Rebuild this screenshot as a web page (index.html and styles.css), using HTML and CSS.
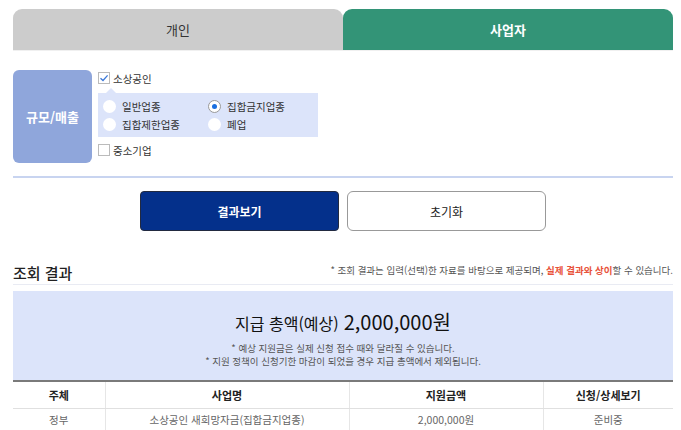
FILE: index.html
```html
<!DOCTYPE html>
<html lang="ko">
<head>
<meta charset="utf-8">
<link rel="stylesheet" href="styles.css">
</head>
<body>
<div class="page">
  <div class="tabs">
    <div class="tab tab-off">개인</div>
    <div class="tab tab-on">사업자</div>
  </div>

  <div class="filter">
    <div class="filter-label">규모/매출</div>
    <div class="filter-options">
      <label class="check-row"><span class="checkbox checked"><svg width="10" height="10" viewBox="0 0 10 10"><path d="M1.5 5.2 L4 7.5 L8.6 2.4" fill="none" stroke="#3b78d8" stroke-width="1.3"/></svg></span>소상공인</label>
      <div class="subbox">
        <div class="radio-item"><span class="radio"></span>일반업종</div>
        <div class="radio-item"><span class="radio selected"></span>집합금지업종</div>
        <div class="radio-item"><span class="radio"></span>집합제한업종</div>
        <div class="radio-item"><span class="radio"></span>폐업</div>
      </div>
      <label class="check-row"><span class="checkbox"></span>중소기업</label>
    </div>
  </div>

  <div class="divider"></div>

  <div class="buttons">
    <button class="btn btn-primary">결과보기</button>
    <button class="btn btn-reset">초기화</button>
  </div>

  <div class="result-head">
    <h2 class="result-title">조회 결과</h2>
    <p class="result-note">* 조회 결과는 입력(선택)한 자료를 바탕으로 제공되며, <span class="warn">실제 결과와 상이</span>할 수 있습니다.</p>
  </div>

  <div class="summary">
    <div class="summary-title">지급 총액(예상) <span class="amount">2,000,000원</span></div>
    <p class="summary-note">* 예상 지원금은 실제 신청 접수 때와 달라질 수 있습니다.</p>
    <p class="summary-note">* 지원 정책이 신청기한 마감이 되었을 경우 지급 총액에서 제외됩니다.</p>
  </div>

  <table class="result-table">
    <thead>
      <tr><th class="c1">주체</th><th class="c2">사업명</th><th class="c3">지원금액</th><th class="c4">신청/상세보기</th></tr>
    </thead>
    <tbody>
      <tr><td>정부</td><td>소상공인 새희망자금(집합금지업종)</td><td>2,000,000원</td><td>준비중</td></tr>
    </tbody>
  </table>
</div>
</body>
</html>
```

FILE: styles.css
```css
* { box-sizing: border-box; }
html, body { margin: 0; padding: 0; background: #fff; }
body {
  font-family: "Noto Sans CJK KR", "Noto Sans", sans-serif;
  color: #222;
  width: 681px;
  height: 430px;
  overflow: hidden;
}
.page { padding: 9px 8px 0 13px; }

.tabs { display: flex; height: 42px; border-bottom: 1px solid #f0f0f0; }
.tab {
  flex: 1;
  display: flex;
  align-items: center;
  justify-content: center;
  border-radius: 9px 9px 0 0;
  font-size: 13px;
}
.tab-off { background: #cccccc; color: #333; }
.tab-on { background: #339477; color: #fff; font-weight: 700; }

.filter { display: flex; gap: 6px; margin-top: 19px; height: 93px; }
.filter-label {
  width: 79px;
  background: #8fa6db;
  color: #fff;
  font-weight: 700;
  font-size: 13px;
  border-radius: 6px;
  display: flex;
  align-items: center;
  justify-content: center;
}
.filter-options { display: flex; flex-direction: column; padding-top: 1px; }
.check-row { display: flex; align-items: center; font-size: 10.5px; color: #333; height: 14px; gap: 3px; }
.checkbox {
  width: 12px; height: 12px;
  border: 1px solid #bbb;
  background: #fff;
  display: inline-flex; align-items: center; justify-content: center;
}
.subbox {
  position: relative;
  margin-top: 8px;
  margin-bottom: 6px;
  width: 220px;
  height: 44px;
  background: #dce4fa;
  display: grid;
  grid-template-columns: 105px 1fr;
  align-content: center;
  row-gap: 4px;
  padding-left: 5px;
}
.subbox::before {
  content: "";
  position: absolute;
  left: 8px; top: -5px;
  border-left: 5px solid transparent;
  border-right: 5px solid transparent;
  border-bottom: 5px solid #dce4fa;
}
.radio-item { display: flex; align-items: center; gap: 6px; font-size: 10.5px; color: #333; height: 14px; }
.radio {
  width: 13px; height: 13px; border-radius: 50%;
  background: #fff;
  display: inline-flex; align-items: center; justify-content: center;
}
.radio.selected { border: 1px solid #999; }
.radio.selected::after { content: ""; width: 5px; height: 5px; border-radius: 50%; background: #1a6fe0; }

.divider { height: 2px; background: #c8d4f0; margin-top: 13px; }

.buttons { display: flex; justify-content: center; gap: 8px; margin-top: 13px; }
.btn {
  width: 199px; height: 40px;
  font-family: inherit; font-size: 12px;
  border-radius: 4px;
}
.btn-primary { background: #04308b; color: #fff; border: 1px solid #222a40; font-weight: 700; }
.btn-reset { background: #fff; color: #222; border: 1px solid #999; border-radius: 6px; }

.result-head {
  display: flex; justify-content: space-between; align-items: center;
  margin-top: 30px; height: 24px;
  border-bottom: 1px solid #e9ebf3;
  padding-bottom: 6px;
}
.result-title { margin: 0; font-size: 15px; font-weight: 500; color: #222; position: relative; top: 3px; }
.result-note { margin: 0; font-size: 9.5px; color: #555; }
.warn { color: #e8533b; font-weight: 700; }

.summary {
  margin-top: 6px;
  height: 89px;
  background: #dce4fa;
  display: flex; flex-direction: column; align-items: center; justify-content: center;
  padding-top: 4px;
}
.summary-title { font-size: 16px; color: #111; margin-bottom: 6px; display: flex; align-items: baseline; gap: 5px; }
.amount { font-size: 20px; font-weight: 400; }
.summary-note { margin: 0; font-size: 9.5px; color: #555; line-height: 13px; }

.result-table { width: 100%; border-collapse: collapse; border-top: 2px solid #7a7a7a; font-size: 11px; }
.result-table th { height: 27px; font-weight: 700; color: #222; border-bottom: 1px solid #e0e0e0; border-left: 1px solid #e6e6e6; }
.result-table td { height: 22px; text-align: center; color: #666; font-size: 10.5px; border-left: 1px solid #e6e6e6; }
.result-table th:first-child, .result-table td:first-child { border-left: none; }
.c1 { width: 92px; }
.c2 { width: 244px; }
.c3 { width: 194px; }
.c4 { width: 130px; }
```
